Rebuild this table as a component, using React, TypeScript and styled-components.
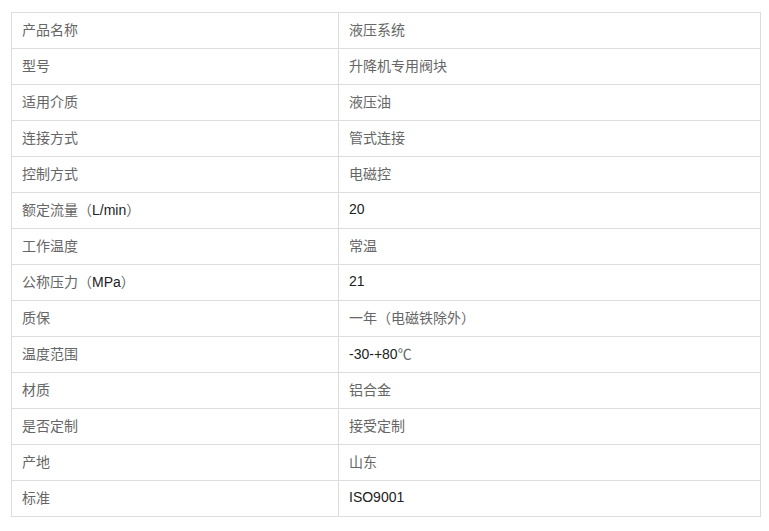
import React from "react";
import styled, { createGlobalStyle } from "styled-components";

const Global = createGlobalStyle`
  html, body { margin: 0; padding: 0; background: #fff; }
  body { font-family: "Liberation Sans", Arial, "Noto Sans CJK SC", sans-serif; }
`;

const Page = styled.div`
  padding: 12px 0 0 11px;
`;

const Table = styled.table`
  border-collapse: collapse;
  width: 750px;
  table-layout: fixed;
`;

const Cell = styled.td<{ $w?: number }>`
  border: 1px solid #dddddd;
  height: 36px;
  padding: 0 10px 3px;
  font-size: 14px;
  color: #666;
  vertical-align: middle;
  box-sizing: border-box;
  white-space: nowrap;
  ${(p) => (p.$w ? `width: ${p.$w}px;` : "")}
`;

const Latin = styled.span`
  color: #222;
`;

const rows: [string, string][] = [
  ["产品名称", "液压系统"],
  ["型号", "升降机专用阀块"],
  ["适用介质", "液压油"],
  ["连接方式", "管式连接"],
  ["控制方式", "电磁控"],
  ["额定流量（L/min）", "20"],
  ["工作温度", "常温"],
  ["公称压力（MPa）", "21"],
  ["质保", "一年（电磁铁除外）"],
  ["温度范围", "-30-+80℃"],
  ["材质", "铝合金"],
  ["是否定制", "接受定制"],
  ["产地", "山东"],
  ["标准", "ISO9001"],
];

function Text({ value }: { value: string }) {
  const parts = value.split(/([\x20-\x7E]+)/).filter(Boolean);
  return (
    <>
      {parts.map((p, i) =>
        /^[\x20-\x7E]+$/.test(p) ? <Latin key={i}>{p}</Latin> : <React.Fragment key={i}>{p}</React.Fragment>
      )}
    </>
  );
}

export default function App() {
  return (
    <Page>
      <Global />
      <Table>
        <tbody>
          {rows.map(([k, v], i) => (
            <tr key={i}>
              <Cell $w={327}>
                <Text value={k} />
              </Cell>
              <Cell>
                <Text value={v} />
              </Cell>
            </tr>
          ))}
        </tbody>
      </Table>
    </Page>
  );
}
